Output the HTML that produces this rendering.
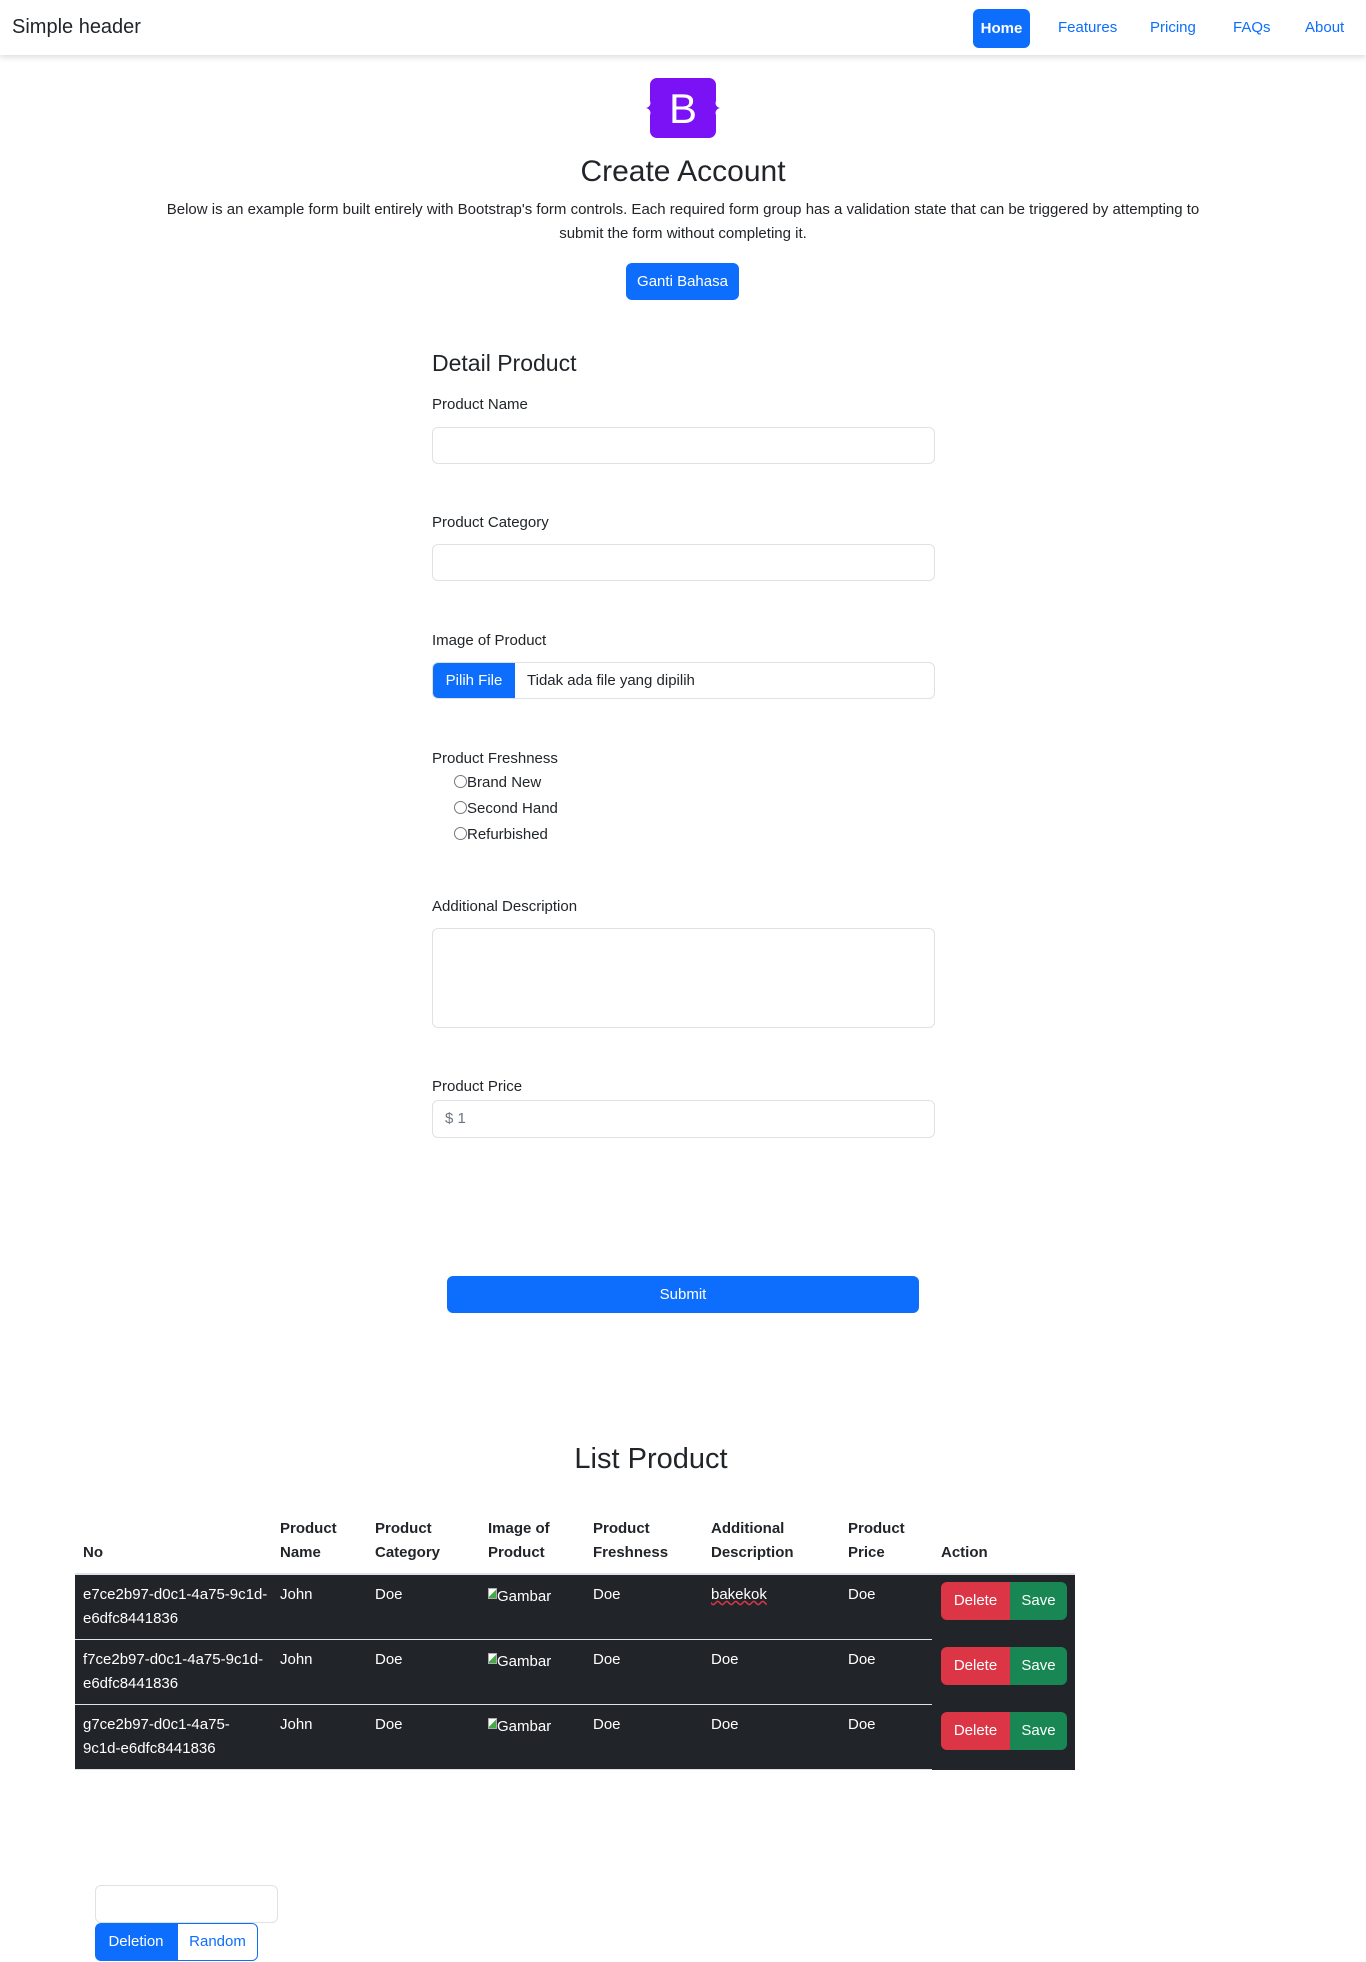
<!DOCTYPE html>
<html><head><meta charset="utf-8"><style>
*{box-sizing:border-box;margin:0;padding:0}
body{width:1366px;height:1962px;position:relative;font-family:"Liberation Sans",sans-serif;color:#212529;background:#fff;overflow:hidden}
.a{position:absolute}
.nav{left:0;top:0;width:1366px;height:55px;background:#fff;box-shadow:0 2px 6px rgba(0,0,0,.15)}
.lnk{color:#0d6efd;font-size:15px;top:19px}
.lbl{font-size:15px;left:432px}
.inp{left:432px;width:503px;border:1px solid #dee2e6;border-radius:6px;background:#fff}
.btn{background:#0d6efd;color:#fff;border-radius:6px;text-align:center;font-size:15px}
.th{font-weight:bold;font-size:15px;line-height:24px}
.cell{color:#fff;font-size:15px;line-height:24px}
.row{left:75px;width:1000px;height:65px;background:#212529}
.sep{left:75px;width:857px;height:1px;background:#dee2e6}
.del{width:69px;height:38px;background:#dc3545;border-radius:6px 0 0 6px;color:#fff;font-size:15px;line-height:38px;text-align:center}
.sav{width:57px;height:38px;background:#198754;border-radius:0 6px 6px 0;color:#fff;font-size:15px;line-height:38px;text-align:center}
.radio{width:13px;height:13px;border:1px solid #767676;border-radius:50%;display:inline-block;vertical-align:-1px}
.img{display:inline-block;width:9px;height:11px;border:1px solid #aaa;background:linear-gradient(135deg,#fff 50%,#4a4 50%);vertical-align:2px}
</style></head><body>
<div class="a nav"></div>
<div class="a" style="left:12px;top:16px;font-size:20px">Simple header</div>
<div class="a btn" style="left:973px;top:9px;width:57px;height:39px;line-height:39px;font-weight:bold">Home</div>
<div class="a lnk" style="left:1058px">Features</div>
<div class="a lnk" style="left:1150px">Pricing</div>
<div class="a lnk" style="left:1233px">FAQs</div>
<div class="a lnk" style="left:1305px">About</div>

<svg class="a" style="left:643px;top:78px" width="80" height="60" viewBox="0 0 80 60">
<path d="M14 0h52a7 7 0 0 1 7 7v16a5 5 0 0 0 5 7a5 5 0 0 0-5 7v16a7 7 0 0 1-7 7H14a7 7 0 0 1-7-7V37a5 5 0 0 0-5-7a5 5 0 0 0 5-7V7a7 7 0 0 1 7-7z" fill="#7b12f5"/>
<text x="40" y="45" text-anchor="middle" font-family="Liberation Sans" font-size="42" fill="#fff">B</text>
</svg>
<div class="a" style="left:0;width:1366px;top:155px;text-align:center;font-size:30px">Create Account</div>
<div class="a" style="left:160px;width:1046px;top:198px;text-align:center;font-size:15px;line-height:24px">Below is an example form built entirely with Bootstrap's form controls. Each required form group has a validation state that can be triggered by attempting to submit the form without completing it.</div>
<div class="a btn" style="left:626px;top:263px;width:113px;height:37px;line-height:37px">Ganti Bahasa</div>

<div class="a" style="left:432px;top:350px;font-size:23px">Detail Product</div>
<div class="a lbl" style="top:396px">Product Name</div>
<div class="a inp" style="top:427px;height:37px"></div>
<div class="a lbl" style="top:514px">Product Category</div>
<div class="a inp" style="top:544px;height:37px"></div>
<div class="a lbl" style="top:632px">Image of Product</div>
<div class="a inp" style="top:662px;height:37px;overflow:hidden"><div class="a" style="left:0;top:0;width:82px;height:37px;background:#0d6efd;color:#fff;font-size:15px;line-height:36px;text-align:center">Pilih File</div><div class="a" style="left:94px;top:9px;font-size:15px">Tidak ada file yang dipilih</div></div>
<div class="a lbl" style="top:750px">Product Freshness</div>
<div class="a" style="left:454px;top:774px;font-size:15px"><span class="radio"></span>Brand New</div>
<div class="a" style="left:454px;top:800px;font-size:15px"><span class="radio"></span>Second Hand</div>
<div class="a" style="left:454px;top:826px;font-size:15px"><span class="radio"></span>Refurbished</div>
<div class="a lbl" style="top:898px">Additional Description</div>
<div class="a inp" style="top:928px;height:100px"></div>
<div class="a lbl" style="top:1078px">Product Price</div>
<div class="a inp" style="top:1100px;height:38px;color:#6c757d;font-size:15px;padding:9px 12px">$ 1</div>
<div class="a btn" style="left:447px;top:1276px;width:472px;height:37px;line-height:37px">Submit</div>

<div class="a" style="left:451px;width:400px;top:1443px;text-align:center;font-size:29px">List Product</div>
<div class="a th" style="left:83px;top:1541px">No</div>
<div class="a th" style="left:280px;top:1517px">Product<br>Name</div>
<div class="a th" style="left:375px;top:1517px">Product<br>Category</div>
<div class="a th" style="left:488px;top:1517px">Image of<br>Product</div>
<div class="a th" style="left:593px;top:1517px">Product<br>Freshness</div>
<div class="a th" style="left:711px;top:1517px">Additional<br>Description</div>
<div class="a th" style="left:848px;top:1517px">Product<br>Price</div>
<div class="a th" style="left:941px;top:1541px">Action</div>
<div class="a" style="left:75px;top:1573px;width:1000px;height:2px;background:#dee2e6"></div>

<div class="a row" style="top:1575px"></div>
<div class="a row" style="top:1640px"></div>
<div class="a row" style="top:1705px"></div>
<div class="a sep" style="top:1639px"></div>
<div class="a sep" style="top:1704px"></div>
<div class="a sep" style="top:1769px"></div>

<div class="a cell" style="left:83px;top:1583px;width:190px">e7ce2b97-d0c1-4a75-9c1d-<br>e6dfc8441836</div>
<div class="a cell" style="left:83px;top:1648px;width:190px">f7ce2b97-d0c1-4a75-9c1d-<br>e6dfc8441836</div>
<div class="a cell" style="left:83px;top:1713px;width:190px">g7ce2b97-d0c1-4a75-<br>9c1d-e6dfc8441836</div>
<div class="a cell" style="left:280px;top:1583px">John</div><div class="a cell" style="left:280px;top:1648px">John</div><div class="a cell" style="left:280px;top:1713px">John</div>
<div class="a cell" style="left:375px;top:1583px">Doe</div><div class="a cell" style="left:375px;top:1648px">Doe</div><div class="a cell" style="left:375px;top:1713px">Doe</div>
<div class="a cell" style="left:488px;top:1585px"><span class="img"></span>Gambar</div><div class="a cell" style="left:488px;top:1650px"><span class="img"></span>Gambar</div><div class="a cell" style="left:488px;top:1715px"><span class="img"></span>Gambar</div>
<div class="a cell" style="left:593px;top:1583px">Doe</div><div class="a cell" style="left:593px;top:1648px">Doe</div><div class="a cell" style="left:593px;top:1713px">Doe</div>
<div class="a cell" style="left:711px;top:1583px;text-decoration:underline wavy #dc3545">bakekok</div><div class="a cell" style="left:711px;top:1648px">Doe</div><div class="a cell" style="left:711px;top:1713px">Doe</div>
<div class="a cell" style="left:848px;top:1583px">Doe</div><div class="a cell" style="left:848px;top:1648px">Doe</div><div class="a cell" style="left:848px;top:1713px">Doe</div>
<div class="a del" style="left:941px;top:1582px">Delete</div><div class="a sav" style="left:1010px;top:1582px">Save</div>
<div class="a del" style="left:941px;top:1647px">Delete</div><div class="a sav" style="left:1010px;top:1647px">Save</div>
<div class="a del" style="left:941px;top:1712px">Delete</div><div class="a sav" style="left:1010px;top:1712px">Save</div>

<div class="a" style="left:95px;top:1885px;width:183px;height:38px;border:1px solid #dee2e6;border-radius:6px"></div>
<div class="a btn" style="left:95px;top:1923px;width:82px;height:38px;line-height:38px;border-radius:6px 0 0 6px">Deletion</div>
<div class="a" style="left:177px;top:1923px;width:81px;height:38px;line-height:36px;border:1px solid #0d6efd;border-radius:0 6px 6px 0;color:#0d6efd;font-size:15px;text-align:center">Random</div>
</body></html>
